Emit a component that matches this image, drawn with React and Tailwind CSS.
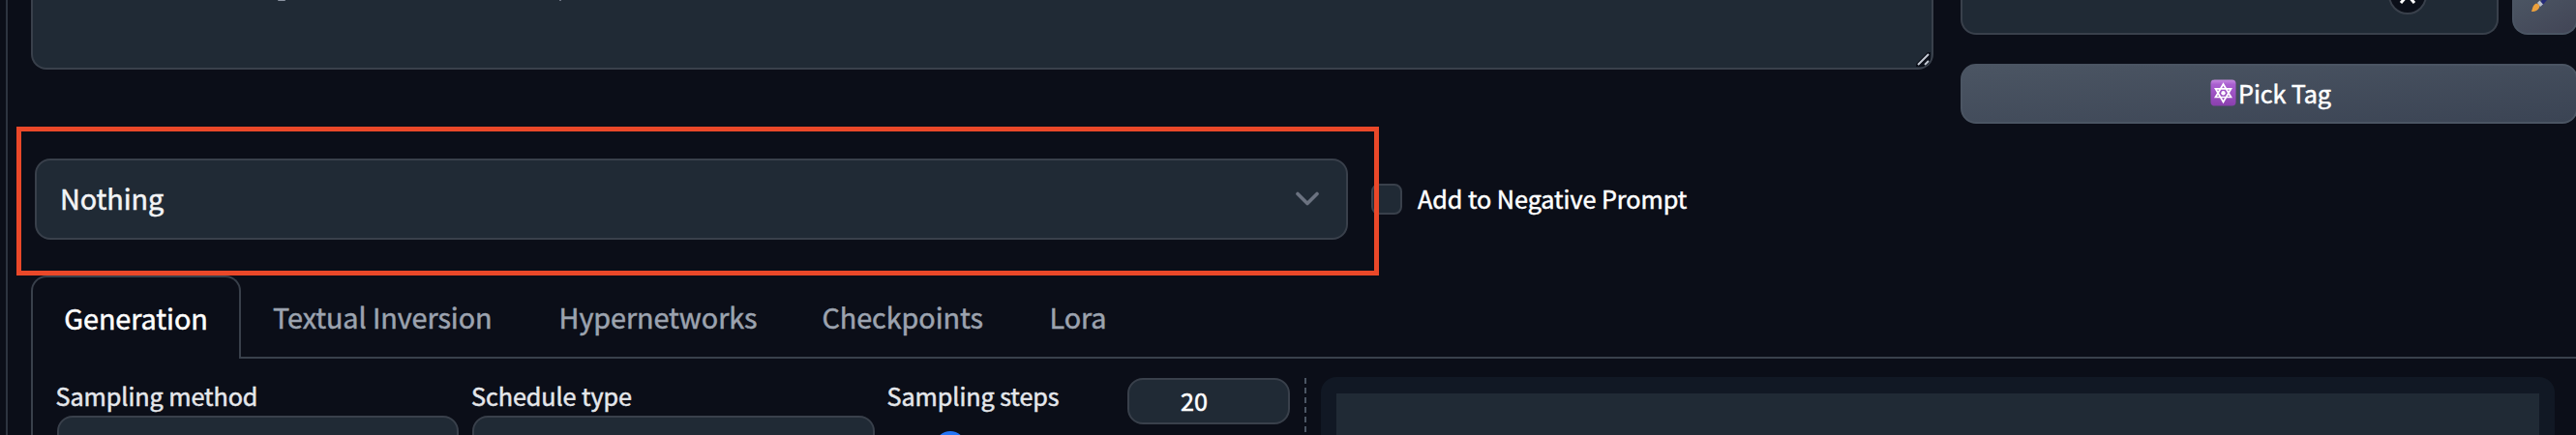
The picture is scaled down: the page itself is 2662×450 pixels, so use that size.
const tabs = [
  { label: 'Textual Inversion', cls: 'w-[295.500px]' },
  { label: 'Hypernetworks', cls: 'w-[272px]' },
  { label: 'Checkpoints', cls: 'w-[235px]' },
  { label: 'Lora', cls: 'w-[100px]' },
];

function ResizeHandle() {
  return (
    <svg className="absolute right-[1px] bottom-[1px]" width="15" height="15" viewBox="0 0 15 15" fill="none">
      <path d="M0 15V12L12 0H15V15Z" fill="#0b0f19" />
      <path d="M2 13L13 2M9 13L13 9" stroke="#c3c9d3" strokeWidth="2" />
    </svg>
  );
}

function StarEmoji() {
  return (
    <svg className="mr-[2px] mb-[2px]" width="27" height="28" viewBox="0 0 27 28" fill="none">
      <defs>
        <linearGradient id="violet" x1="0" y1="0" x2="0" y2="1">
          <stop offset="0" stopColor="#c58be0" />
          <stop offset="0.18" stopColor="#a95fd0" />
          <stop offset="1" stopColor="#8a3fae" />
        </linearGradient>
      </defs>
      <rect x="0.5" y="0.5" width="26" height="27" rx="4" fill="url(#violet)" />
      <path d="M13.5 5L21.500 18.500H5.500ZM13.5 23.500L21.500 9.800H5.500Z" stroke="#fff" strokeWidth="1.700" />
      <circle cx="13.5" cy="14.200" r="2.200" fill="#fff" />
    </svg>
  );
}

function PromptRow() {
  return (
    <div className="flex h-[131px] shrink-0 items-start pl-[32px]">
      <div className="relative h-[72px] w-[1966px] shrink-0 overflow-hidden rounded-b-[16px] border-2 border-t-0 border-[#39404b] bg-[#202a35]">
        <div className="flex pl-[253px]">
          <div className="h-[1px] w-[8px] rounded-b-full bg-[#8b93a1]" />
          <div className="ml-[283px] h-[1px] w-[2px] bg-[#6b7280]" />
        </div>
        <ResizeHandle />
      </div>
      <div className="ml-[28px] flex w-[638px] shrink-0 flex-col gap-[30px]">
        <div className="flex gap-[14px]">
          <div className="flex h-[36px] w-[556px] items-start justify-end rounded-b-[16px] border-2 border-t-0 border-[#39404b] bg-[#202a35] pr-[72px]">
            <svg width="40" height="17" viewBox="0 0 40 17" fill="none">
              <circle cx="20" cy="-5" r="19" fill="#0b0f19" stroke="#39404b" strokeWidth="2" />
              <path d="M13 3L20 -5L27 3" stroke="#fff" strokeWidth="3" />
            </svg>
          </div>
          <div className="h-[36px] w-[68px] rounded-b-[16px] border-2 border-t-0 border-[#4b5563] bg-linear-to-br from-[#4b5563] to-[#424556] pl-[17px]">
            <svg width="20" height="14" viewBox="0 0 20 14" fill="none">
              <path d="M9 3L12 0H17L12 6Z" fill="#252b78" />
              <path d="M7 3L9.500 0.500L13 4.500L10 7Z" fill="#b9bec7" />
              <path d="M1 12C2 10 2 5 6 3.500C9 4 10 6 9 8C7.500 11 4 12.500 1 12Z" fill="#eda13c" />
            </svg>
          </div>
        </div>
        <button className="flex h-[62px] w-[638px] items-center justify-center rounded-[16px] border-2 border-[#4b5563] bg-linear-to-br from-[#4b5563] to-[#3b4454] pl-[3px] text-[25.2px] tracking-[-0.1px] text-white [-webkit-text-stroke:0.5px]">
          <StarEmoji />
          <span className="leading-none">Pick Tag</span>
        </button>
      </div>
    </div>
  );
}

function StyleRow() {
  return (
    <div className="relative flex h-[154px] shrink-0 items-center pl-[36px]">
      <div className="mt-[-4px] flex h-[84px] w-[1357px] items-center justify-between rounded-[16px] border-2 border-[#39404b] bg-[#202a35] pr-[28px] pl-[24px] text-[28.8px] text-[#f3f4f6]">
        <span className="pb-[1px] leading-none tracking-[-0.1px] [-webkit-text-stroke:0.5px]">Nothing</span>
        <svg width="24" height="16" viewBox="0 0 24 16" fill="none">
          <path d="M2 2.500L12 12.500L22 2.500" stroke="#6b7280" strokeWidth="3.600" strokeLinejoin="round" strokeLinecap="round" />
        </svg>
      </div>
      <div className="mt-[-4px] ml-[24px] h-[32px] w-[32px] rounded-[8px] border-2 border-[#39404b] bg-[#202a35]" />
      <span className="mt-[-4px] ml-[16px] text-[25.2px] leading-none tracking-[-0.050px] text-white [-webkit-text-stroke:0.5px]">
        Add to Negative Prompt
      </span>
      <div className="absolute top-0 left-[17px] h-[154px] w-[1408px] border-[5px] border-[#ea4829]" />
    </div>
  );
}

function TabBar() {
  return (
    <div className="flex h-[86px] shrink-0 text-[28.800px] leading-none tracking-[-0.080px] [-webkit-text-stroke:0.5px]">
      <div className="flex w-[217px] shrink-0 items-center justify-center rounded-t-[16px] border-2 border-b-0 border-[#39404b] pt-[1px] text-white">
        Generation
      </div>
      <div className="flex grow items-center border-b-2 border-[#39404b] pt-[2px] pl-[33px] text-[#9ca3af]">
        {tabs.map((t) => (
          <span key={t.label} className={'shrink-0 whitespace-nowrap ' + t.cls}>
            {t.label}
          </span>
        ))}
      </div>
    </div>
  );
}

function SelectField({ label }) {
  return (
    <div className="mr-[14px] w-[415.500px] shrink-0">
      <div className="flex h-[59px] items-start pt-[26px] leading-none">
        <span className="ml-[-1px]">{label}</span>
      </div>
      <div className="h-[70px] rounded-[16px] border-2 border-[#39404b] bg-[#202a35]" />
    </div>
  );
}

function Settings() {
  return (
    <div className="flex h-[79px] items-start border-l-2 border-[#39404b] pl-[24.500px] text-[25.200px] tracking-[-0.080px] text-[#e5e7eb] [-webkit-text-stroke:0.5px]">
      <SelectField label="Sampling method" />
      <SelectField label="Schedule type" />
      <div className="w-[415px] shrink-0">
        <div className="flex h-[75px] items-start justify-between">
          <span className="ml-[-1px] pt-[26px] leading-none">Sampling steps</span>
          <div className="mt-[20px] flex h-[48px] w-[168px] items-center rounded-[16px] border-2 border-[#39404b] bg-[#202a35] pl-[53.500px] leading-none text-white">
            20
          </div>
        </div>
        <div className="ml-[48px] h-[32px] w-[32px] rounded-full bg-[#2475f5]" />
      </div>
      <svg className="mt-[20px] ml-[15px] shrink-0" width="2" height="59" viewBox="0 0 2 59">
        <path d="M1 0V57" stroke="#4b5563" strokeWidth="2" strokeDasharray="6 4" />
      </svg>
      <div className="mt-[19px] ml-[15px] h-[90px] w-[1275px] shrink-0 rounded-[16px] bg-[#111824] px-[16px] pt-[17px]">
        <div className="h-[80px] bg-[#202a35]" />
      </div>
    </div>
  );
}

export default function App() {
  return (
    <div className="flex h-[450px] w-[2662px] flex-col overflow-hidden bg-[#0b0e18] font-['Noto_Sans_CJK_SC','Open_Sans',sans-serif]">
      <div className="relative flex h-[450px] flex-col">
        <div className="absolute top-0 left-[6px] h-full w-[2px] bg-[#2d3440]" />
        <PromptRow />
        <StyleRow />
        <div className="ml-[32px] flex flex-col">
          <TabBar />
          <Settings />
        </div>
      </div>
    </div>
  );
}
